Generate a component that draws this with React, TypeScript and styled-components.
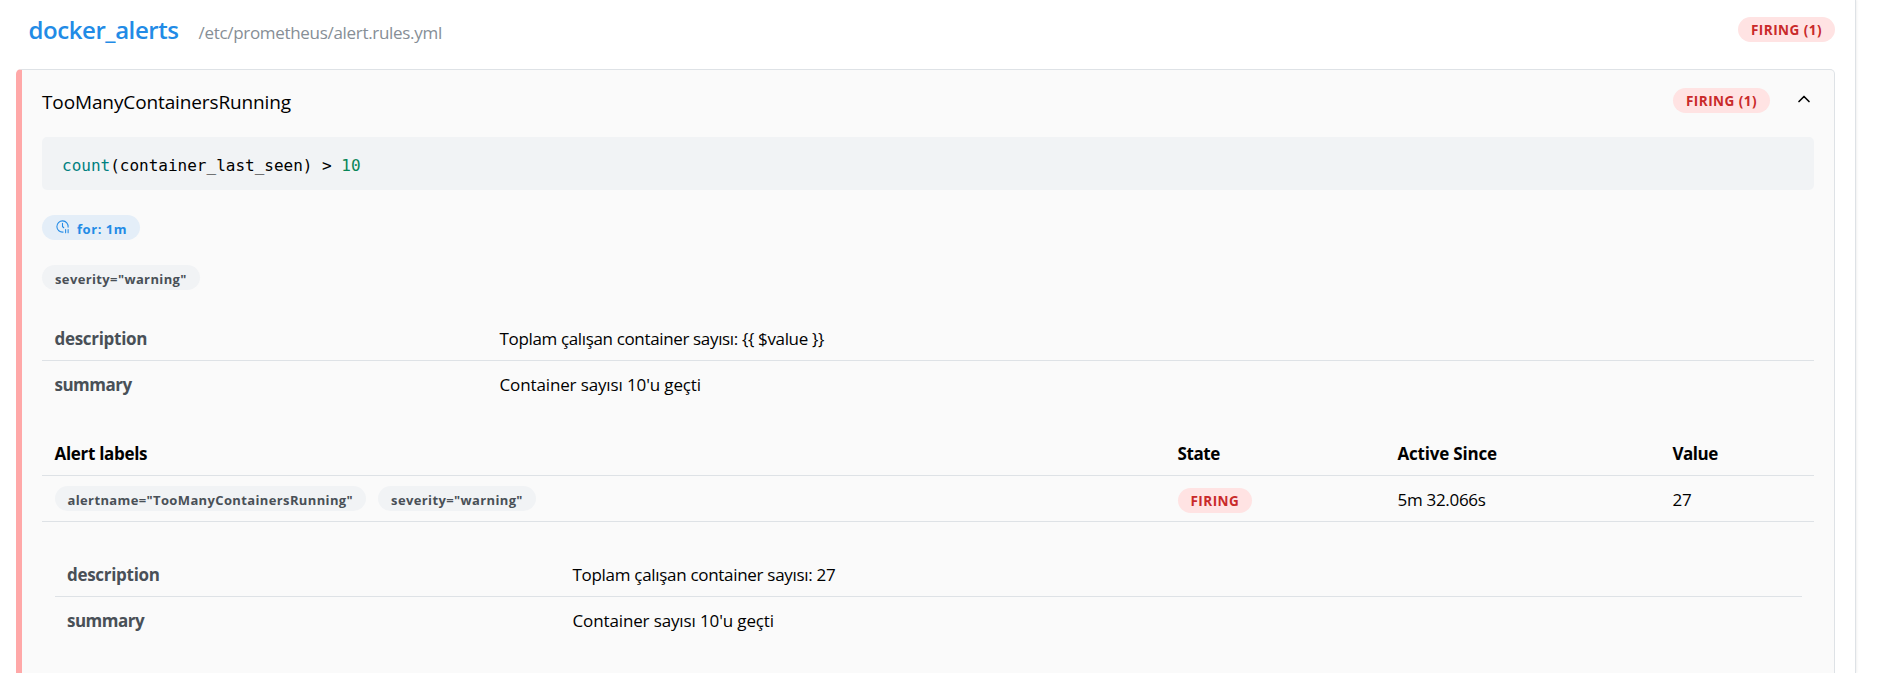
import React from "react";
import styled, { createGlobalStyle } from "styled-components";

const GlobalStyle = createGlobalStyle`
  * { box-sizing: border-box; }
  html, body { margin: 0; background: #fff; }
  body {
    height: 673px;
    overflow: hidden;
    font-family: "Open Sans", "Noto Sans", sans-serif;
    font-size: 17px;
    color: #000;
  }
`;

const Page = styled.div`
  display: flex;
  height: 673px;
  overflow: hidden;
`;

const Panel = styled.section`
  width: 1856px;
  flex: none;
  padding: 0 20px 0 16px;
  border-right: 1px solid #dee2e6;
  box-shadow: 1px 0 2px rgba(0, 0, 0, 0.06);
`;

const GroupHeader = styled.header`
  display: flex;
  align-items: center;
  justify-content: space-between;
  height: 69px;
  padding: 0 0 10px 12.5px;
`;

const GroupTitle = styled.div`
  display: flex;
  align-items: baseline;
  gap: 20px;
  padding-top: 3px;
  line-height: 34px;
`;

const GroupName = styled.h3`
  margin: 0;
  font-size: 24px;
  font-weight: 600;
  letter-spacing: -0.43px;
  color: #228be6;
`;

const FilePath = styled.span`
  font-size: 17px;
  letter-spacing: -0.31px;
  color: #868e96;
`;

const RuleCard = styled.article`
  height: 700px;
  padding: 0 20px;
  background: #fafafa;
  border: 1px solid #dee2e6;
  border-left: 6px solid #ffa8a8;
  border-radius: 5px;
`;

const RuleHeader = styled.div`
  display: flex;
  align-items: center;
  justify-content: space-between;
  height: 67px;
  padding-bottom: 5px;
`;

const RuleName = styled.span`
  padding-top: 2px;
  font-size: 19px;
  line-height: 30px;
  letter-spacing: -0.12px;
`;

const RuleStatus = styled.div`
  display: flex;
  align-items: center;
  gap: 24px;
  padding-bottom: 1px;
`;

const Badge = styled.span<{ $tone: "red" | "blue" | "gray" }>`
  display: inline-flex;
  align-items: center;
  height: 25px;
  padding: 1px 13px 0;
  border-radius: 13px;
  font-size: ${(p) => (p.$tone === "red" ? 13.5 : 13)}px;
  font-weight: 700;
  letter-spacing: ${(p) => ({ red: 0.46, blue: 0.55, gray: 0.37 })[p.$tone]}px;
  white-space: nowrap;
  color: ${(p) => ({ red: "#c92a2a", blue: "#228be6", gray: "#495057" })[p.$tone]};
  background: ${(p) => ({ red: "#ffe3e3", blue: "#e4eef8", gray: "#f1f3f5" })[p.$tone]};
`;

const BadgeText = styled.span`
  padding-top: 1px;
`;

const Query = styled.pre`
  display: flex;
  align-items: center;
  height: 53px;
  margin: 0;
  padding: 4px 20px 0;
  border-radius: 5px;
  background: #f1f3f5;
`;

const Code = styled.code`
  font: 16px "DejaVu Sans Mono", monospace;
`;

const Fn = styled.span`
  color: #008080;
`;

const Num = styled.span`
  color: #098658;
`;

const BadgeRow = styled.div`
  display: flex;
  margin-top: 25px;
`;

const Table = styled.div<{ $top: number; $inset?: number }>`
  margin: ${(p) => p.$top}px ${(p) => p.$inset || 0}px 0;
`;

const Row = styled.div<{ $cols: string; $line?: boolean }>`
  display: grid;
  grid-template-columns: ${(p) => p.$cols};
  align-items: center;
  height: 46px;
  border-bottom: 1px solid ${(p) => (p.$line ? "#dee2e6" : "transparent")};
`;

const Cell = styled.div<{ $kind?: "label" | "head"; $track?: number }>`
  padding: 2px 12.5px 0;
  line-height: 26px;
  white-space: nowrap;
  letter-spacing: ${(p) => p.$track ?? -0.3}px;
  font-weight: ${(p) => (p.$kind ? 700 : 400)};
  color: ${(p) => (p.$kind === "label" ? "#495057" : "#000")};
`;

const BadgeCell = styled.div<{ $drop?: boolean }>`
  display: flex;
  gap: 12px;
  padding: ${(p) => (p.$drop ? 3 : 0)}px 12.5px 0;
`;

const Chevron = styled.svg`
  display: block;
  margin-bottom: 3px;
`;

const Clock = styled.svg`
  display: block;
  margin: 0 7px 3px 0;
`;

const ChevronUp = () => (
  <Chevron width="20" height="20" viewBox="0 0 24 24" fill="none" stroke="#000" strokeWidth="2" strokeLinecap="round" strokeLinejoin="round">
    <path d="M6 15l6-6l6 6" />
  </Chevron>
);

const ClockPause = () => (
  <Clock width="15" height="15" viewBox="0 0 24 24" fill="none" stroke="currentColor" strokeWidth="1.7" strokeLinecap="round" strokeLinejoin="round">
    <path d="M20.942 13.018a9 9 0 1 0-7.909 7.922M12 7v5l2 2M17 17v5M21 17v5" />
  </Clock>
);

const alertCols = "1123px 220px 275px 1fr";

type AnnotationsProps = {
  cols: string;
  top: number;
  inset?: number;
  description: string;
  track: number;
};

const Annotations = ({ cols, top, inset, description, track }: AnnotationsProps) => (
  <Table $top={top} $inset={inset}>
    <Row $cols={cols} $line>
      <Cell $kind="label">description</Cell>
      <Cell $track={track}>{description}</Cell>
    </Row>
    <Row $cols={cols}>
      <Cell $kind="label" $track={-0.5}>summary</Cell>
      <Cell $track={-0.13}>Container sayısı 10'u geçti</Cell>
    </Row>
  </Table>
);

export default function App() {
  return (
    <Page>
      <GlobalStyle />
      <Panel>
        <GroupHeader>
          <GroupTitle>
            <GroupName>docker_alerts</GroupName>
            <FilePath>/etc/prometheus/alert.rules.yml</FilePath>
          </GroupTitle>
          <Badge $tone="red">FIRING (1)</Badge>
        </GroupHeader>
        <RuleCard>
          <RuleHeader>
            <RuleName>TooManyContainersRunning</RuleName>
            <RuleStatus>
              <Badge $tone="red">FIRING (1)</Badge>
              <ChevronUp />
            </RuleStatus>
          </RuleHeader>
          <Query>
            <Code>
              <Fn>count</Fn>(container_last_seen) &gt; <Num>10</Num>
            </Code>
          </Query>
          <BadgeRow>
            <Badge $tone="blue"><ClockPause /><BadgeText>for: 1m</BadgeText></Badge>
          </BadgeRow>
          <BadgeRow>
            <Badge $tone="gray"><BadgeText>severity="warning"</BadgeText></Badge>
          </BadgeRow>
          <Annotations cols="445px 1fr" top={25} track={-0.35} description="Toplam çalışan container sayısı: {{ $value }}" />
          <Table $top={23}>
            <Row $cols={alertCols} $line>
              <Cell $kind="head">Alert labels</Cell>
              <Cell $kind="head" $track={-0.4}>State</Cell>
              <Cell $kind="head" $track={-0.2}>Active Since</Cell>
              <Cell $kind="head" $track={-0.5}>Value</Cell>
            </Row>
            <Row $cols={alertCols} $line>
              <BadgeCell>
                <Badge $tone="gray"><BadgeText>alertname="TooManyContainersRunning"</BadgeText></Badge>
                <Badge $tone="gray"><BadgeText>severity="warning"</BadgeText></Badge>
              </BadgeCell>
              <BadgeCell $drop><Badge $tone="red"><BadgeText>FIRING</BadgeText></Badge></BadgeCell>
              <Cell>5m 32.066s</Cell>
              <Cell>27</Cell>
            </Row>
          </Table>
          <Annotations cols="505.5px 1fr" top={29} inset={12.5} track={-0.3} description="Toplam çalışan container sayısı: 27" />
        </RuleCard>
      </Panel>
    </Page>
  );
}
